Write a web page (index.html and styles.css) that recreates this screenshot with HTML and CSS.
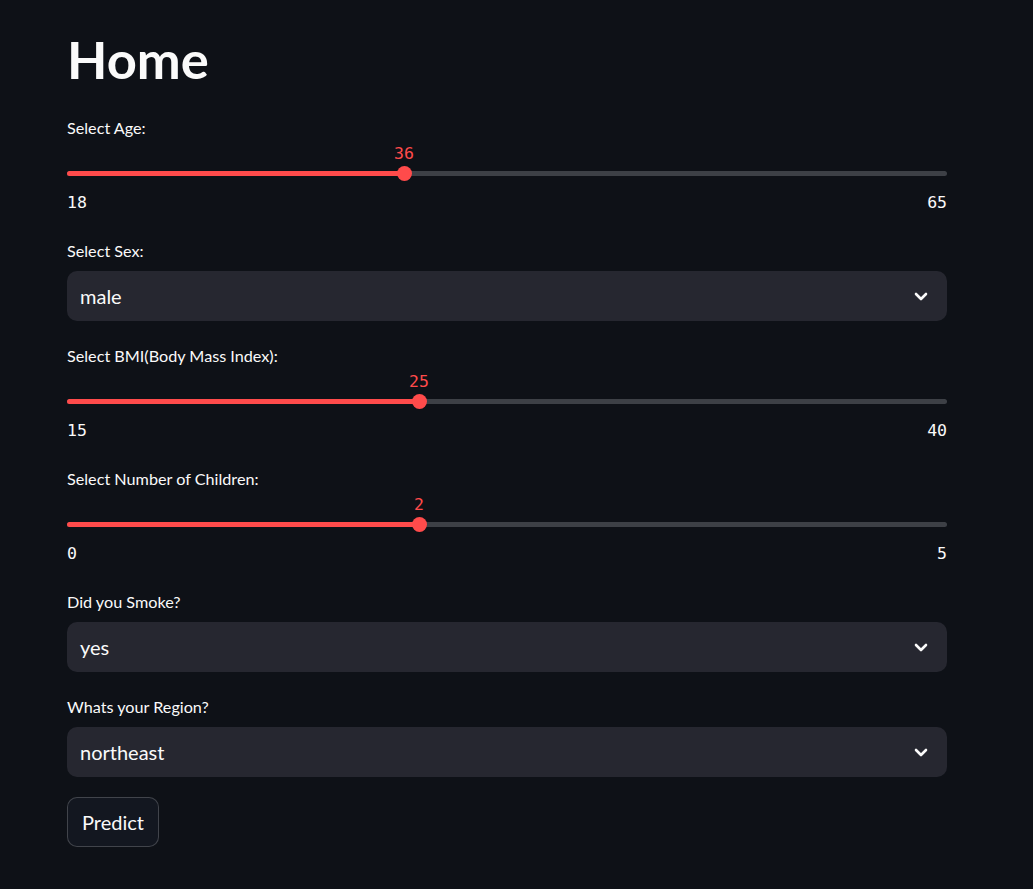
FILE: index.html
```html
<!DOCTYPE html>
<html lang="en">
<head>
<meta charset="utf-8">
<title>Home</title>
<link rel="stylesheet" href="styles.css">
</head>
<body>
<main class="main">
  <h1 class="title">Home</h1>

  <div class="slider-block">
    <label class="label">Select Age:</label>
    <div class="slider">
      <div class="track"><div class="fill" style="width:38.298%"></div></div>
      <div class="thumb" style="left:38.298%"><span class="value">36</span></div>
    </div>
    <div class="ticks"><span>18</span><span>65</span></div>
  </div>

  <div class="select-block">
    <label class="label">Select Sex:</label>
    <div class="select"><span>male</span>
      <svg class="chev" width="20" height="20" viewBox="0 0 20 20"><polyline points="5,8 10,13 15,8" fill="none" stroke="#fafafa" stroke-width="2.6" stroke-linecap="round" stroke-linejoin="round"/></svg>
    </div>
  </div>

  <div class="slider-block">
    <label class="label">Select BMI(Body Mass Index):</label>
    <div class="slider">
      <div class="track"><div class="fill" style="width:40%"></div></div>
      <div class="thumb" style="left:40%"><span class="value">25</span></div>
    </div>
    <div class="ticks"><span>15</span><span>40</span></div>
  </div>

  <div class="slider-block">
    <label class="label">Select Number of Children:</label>
    <div class="slider">
      <div class="track"><div class="fill" style="width:40%"></div></div>
      <div class="thumb" style="left:40%"><span class="value">2</span></div>
    </div>
    <div class="ticks"><span>0</span><span>5</span></div>
  </div>

  <div class="select-block">
    <label class="label">Did you Smoke?</label>
    <div class="select"><span>yes</span>
      <svg class="chev" width="20" height="20" viewBox="0 0 20 20"><polyline points="5,8 10,13 15,8" fill="none" stroke="#fafafa" stroke-width="2.6" stroke-linecap="round" stroke-linejoin="round"/></svg>
    </div>
  </div>

  <div class="select-block">
    <label class="label">Whats your Region?</label>
    <div class="select"><span>northeast</span>
      <svg class="chev" width="20" height="20" viewBox="0 0 20 20"><polyline points="5,8 10,13 15,8" fill="none" stroke="#fafafa" stroke-width="2.6" stroke-linecap="round" stroke-linejoin="round"/></svg>
    </div>
  </div>

  <div class="button-row">
    <button class="btn">Predict</button>
  </div>
</main>
</body>
</html>
```
FILE: styles.css
```css
html, body {
  margin: 0;
  padding: 0;
  background: #0e1117;
  color: #fafafa;
  font-family: "Lato", "Noto Sans", sans-serif;
}

.main {
  width: 880px;
  padding: 28px 0 0 67px;
  display: flex;
  flex-direction: column;
  gap: 20px;
}

.title {
  margin: 0 0 7px 0;
  font-size: 52.5px;
  line-height: 62px;
  font-weight: 700;
  color: #fafafa;
}

.label {
  display: block;
  font-size: 16.2px;
  line-height: 22px;
  height: 22px;
  color: #fafafa;
}

.slider-block {
  padding-bottom: 5px;
}

.slider {
  position: relative;
  height: 52px;
}

.track {
  position: absolute;
  left: 0;
  right: 0;
  top: 32px;
  height: 5px;
  border-radius: 3px;
  background: #3d4046;
  overflow: hidden;
}

.fill {
  height: 100%;
  background: #ff4b4b;
}

.thumb {
  position: absolute;
  top: 27px;
  width: 15px;
  height: 15px;
  margin-left: -7.5px;
  border-radius: 50%;
  background: #ff4b4b;
}

.value {
  position: absolute;
  left: 50%;
  bottom: 17px;
  transform: translateX(-50%);
  font-family: "DejaVu Sans Mono", monospace;
  font-size: 16.5px;
  line-height: 20px;
  color: #ff4b4b;
  white-space: nowrap;
}

.ticks {
  display: flex;
  justify-content: space-between;
  font-family: "DejaVu Sans Mono", monospace;
  font-size: 16.5px;
  line-height: 24px;
  color: #fafafa;
}

.select-block {
  padding-bottom: 4px;
}

.select-block .label {
  margin-bottom: 9px;
}

.select {
  height: 50px;
  box-sizing: border-box;
  background: #262730;
  border-radius: 10px;
  padding: 0 16px 0 13px;
  display: flex;
  align-items: center;
  justify-content: space-between;
  font-size: 20px;
  color: #fafafa;
}

.chev {
  display: block;
}

.button-row {
  margin-top: -4px;
}

.btn {
  height: 50px;
  box-sizing: border-box;
  padding: 0 14px;
  background: #131720;
  border: 1px solid rgba(250, 250, 250, 0.2);
  border-radius: 10px;
  color: #fafafa;
  font-family: "Lato", "Noto Sans", sans-serif;
  font-size: 20px;
}
```
